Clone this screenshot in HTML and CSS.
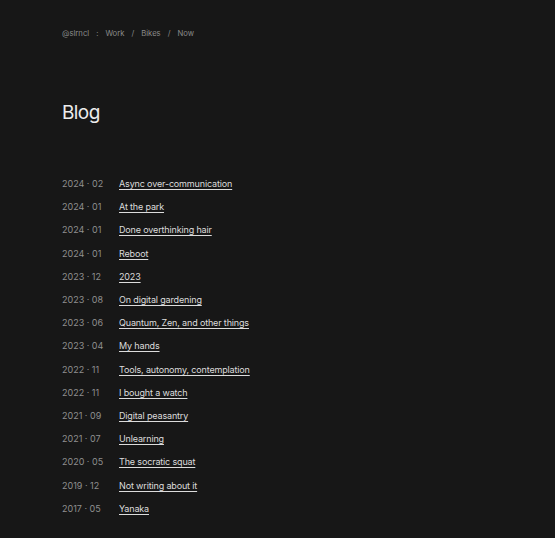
FILE: index.html
```html
<!DOCTYPE html>
<html>
<head>
<meta charset="utf-8">
<link rel="stylesheet" href="styles.css">
</head>
<body>
<div class="page">
  <nav class="crumbs">
    <a href="#">@slrncl</a><span class="sep">:</span>
    <a href="#">Work</a><span class="sep">/</span>
    <a href="#">Bikes</a><span class="sep">/</span>
    <a href="#">Now</a>
  </nav>
  <h1 class="title">Blog</h1>
  <ul class="posts">
    <li><span class="date">2024 · 02</span><a href="#">Async over-communication</a></li>
    <li><span class="date">2024 · 01</span><a href="#">At the park</a></li>
    <li><span class="date">2024 · 01</span><a href="#">Done overthinking hair</a></li>
    <li><span class="date">2024 · 01</span><a href="#">Reboot</a></li>
    <li><span class="date">2023 · 12</span><a href="#">2023</a></li>
    <li><span class="date">2023 · 08</span><a href="#">On digital gardening</a></li>
    <li><span class="date">2023 · 06</span><a href="#">Quantum, Zen, and other things</a></li>
    <li><span class="date">2023 · 04</span><a href="#">My hands</a></li>
    <li><span class="date">2022 · 11</span><a href="#">Tools, autonomy, contemplation</a></li>
    <li><span class="date">2022 · 11</span><a href="#">I bought a watch</a></li>
    <li><span class="date">2021 · 09</span><a href="#">Digital peasantry</a></li>
    <li><span class="date">2021 · 07</span><a href="#">Unlearning</a></li>
    <li><span class="date">2020 · 05</span><a href="#">The socratic squat</a></li>
    <li><span class="date">2019 · 12</span><a href="#">Not writing about it</a></li>
    <li><span class="date">2017 · 05</span><a href="#">Yanaka</a></li>
  </ul>
</div>
</body>
</html>
```
FILE: styles.css
```css
html, body {
  margin: 0;
  padding: 0;
  background: #171717;
}
body {
  font-family: Inter, "Noto Sans", sans-serif;
  color: #e0e0e0;
}
.page {
  padding: 29px 62px 20px;
}
.crumbs {
  font-size: 7.7px;
  color: #8a8a8a;
  display: flex;
  gap: 7px;
  line-height: 10px;
}
.crumbs a {
  color: #8a8a8a;
  text-decoration: none;
}
.title {
  margin: 62px 0 0;
  font-size: 19px;
  font-weight: 400;
  letter-spacing: -0.6px;
  color: #ececec;
  line-height: 24px;
}
.posts {
  list-style: none;
  margin: 47px 0 0;
  padding: 0;
}
.posts li {
  display: flex;
  height: 23.2px;
  align-items: center;
  font-size: 9px;
}
.date {
  width: 57px;
  color: #8f8f8f;
}
.posts a {
  color: #dcdcdc;
  letter-spacing: -0.15px;
  text-decoration: underline;
  text-underline-offset: 2px;
}
```
